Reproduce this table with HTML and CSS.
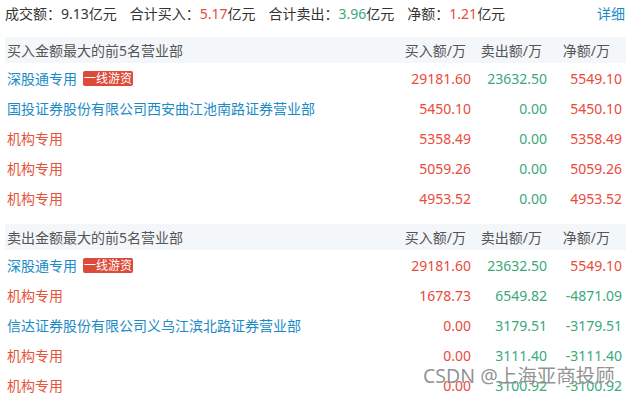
FILE: index.html
```html
<!DOCTYPE html>
<html lang="zh-CN">
<head>
<meta charset="utf-8">
<link rel="stylesheet" href="styles.css">
</head>
<body>
<div class="page">
  <div class="summary">
    <span class="item">成交额：9.13亿元</span>
    <span class="item">合计买入：<span class="red">5.17</span>亿元</span>
    <span class="item">合计卖出：<span class="green">3.96</span>亿元</span>
    <span class="item">净额：<span class="red">1.21</span>亿元</span>
    <span class="more">详细</span>
  </div>

  <div class="section">
    <div class="row head">
      <span class="name">买入金额最大的前5名营业部</span>
      <span class="num h1">买入额/万</span>
      <span class="num h2">卖出额/万</span>
      <span class="num h3">净额/万</span>
    </div>
    <div class="row">
      <span class="name blue">深股通专用<span class="badge">一线游资</span></span>
      <span class="num red">29181.60</span>
      <span class="num green">23632.50</span>
      <span class="num red">5549.10</span>
    </div>
    <div class="row">
      <span class="name blue">国投证券股份有限公司西安曲江池南路证券营业部</span>
      <span class="num red">5450.10</span>
      <span class="num green">0.00</span>
      <span class="num red">5450.10</span>
    </div>
    <div class="row">
      <span class="name orange">机构专用</span>
      <span class="num red">5358.49</span>
      <span class="num green">0.00</span>
      <span class="num red">5358.49</span>
    </div>
    <div class="row">
      <span class="name orange">机构专用</span>
      <span class="num red">5059.26</span>
      <span class="num green">0.00</span>
      <span class="num red">5059.26</span>
    </div>
    <div class="row">
      <span class="name orange">机构专用</span>
      <span class="num red">4953.52</span>
      <span class="num green">0.00</span>
      <span class="num red">4953.52</span>
    </div>
  </div>

  <div class="section second">
    <div class="row head">
      <span class="name">卖出金额最大的前5名营业部</span>
      <span class="num h1">买入额/万</span>
      <span class="num h2">卖出额/万</span>
      <span class="num h3">净额/万</span>
    </div>
    <div class="row">
      <span class="name blue">深股通专用<span class="badge">一线游资</span></span>
      <span class="num red">29181.60</span>
      <span class="num green">23632.50</span>
      <span class="num red">5549.10</span>
    </div>
    <div class="row">
      <span class="name orange">机构专用</span>
      <span class="num red">1678.73</span>
      <span class="num green">6549.82</span>
      <span class="num green">-4871.09</span>
    </div>
    <div class="row">
      <span class="name blue">信达证券股份有限公司义乌江滨北路证券营业部</span>
      <span class="num red">0.00</span>
      <span class="num green">3179.51</span>
      <span class="num green">-3179.51</span>
    </div>
    <div class="row">
      <span class="name orange">机构专用</span>
      <span class="num red">0.00</span>
      <span class="num green">3111.40</span>
      <span class="num green">-3111.40</span>
    </div>
    <div class="row">
      <span class="name orange">机构专用</span>
      <span class="num red">0.00</span>
      <span class="num green">3100.92</span>
      <span class="num green">-3100.92</span>
    </div>
  </div>
</div>
<div class="watermark">CSDN @上海亚商投顾</div>
</body>
</html>
```

FILE: styles.css
```css
html, body {
  margin: 0;
  padding: 0;
  background: #ffffff;
}
body {
  font-family: "Noto Sans", "Noto Sans CJK SC", sans-serif;
  font-size: 14px;
  color: #333333;
  width: 630px;
  height: 399px;
  overflow: hidden;
  position: relative;
}
.page {
  padding: 0 4px 0 5px;
}
.summary {
  display: flex;
  align-items: center;
  height: 28px;
  line-height: 28px;
  margin-bottom: 9px;
}
.summary .item {
  margin-right: 13px;
}
.summary .more {
  margin-left: auto;
  color: #1b8bc6;
  margin-right: 1px;
}
.red { color: #ea4a3c; }
.green { color: #3aa97a; }
.blue { color: #1b8bc6; }
.orange { color: #e5533a; }

.section.second {
  margin-top: 11px;
}
.row {
  display: grid;
  grid-template-columns: 1fr 76px 76px 75px;
  align-items: center;
  height: 30px;
  padding: 0 4px 0 2px;
  white-space: nowrap;
}
.row.head {
  height: 26px;
  background: #f4f7fa;
  color: #555555;
}
.name {
  display: flex;
  align-items: center;
}
.num {
  text-align: right;
}
.head .h1, .head .h2 {
  padding-right: 5px;
}
.head .h3 {
  padding-right: 12px;
}
.badge {
  display: inline-block;
  margin-left: 6px;
  background: #dd4a38;
  color: #ffffff;
  font-size: 12px;
  line-height: 15px;
  height: 15px;
  padding: 0 1px;
  border-radius: 2px;
}
.watermark {
  position: absolute;
  left: 423px;
  top: 365px;
  font-size: 19.5px;
  line-height: 22px;
  color: rgba(110, 110, 110, 0.75);
  text-shadow: 0 0 1px rgba(255, 255, 255, 0.8);
  white-space: nowrap;
}
```
